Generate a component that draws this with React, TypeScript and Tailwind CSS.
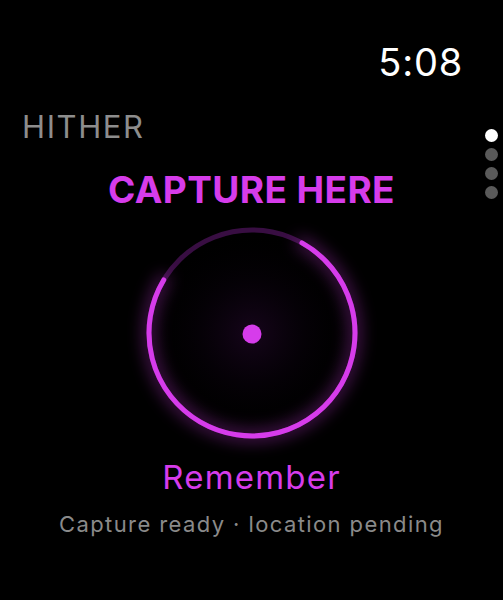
import React from "react";

const ACCENT = "#d63ceb";

// Arc from startDeg to endDeg (clockwise, 0 = top)
function arcPath(cx: number, cy: number, r: number, startDeg: number, endDeg: number) {
  const toXY = (deg: number) => {
    const a = ((deg - 90) * Math.PI) / 180;
    return [cx + r * Math.cos(a), cy + r * Math.sin(a)];
  };
  const [x1, y1] = toXY(startDeg);
  const [x2, y2] = toXY(endDeg);
  const sweep = (endDeg - startDeg + 360) % 360;
  const large = sweep > 180 ? 1 : 0;
  return `M ${x1} ${y1} A ${r} ${r} 0 ${large} 1 ${x2} ${y2}`;
}

function CaptureRing() {
  const size = 260;
  const c = size / 2;
  const r = 103;
  const progress = arcPath(c, c, r, 29, 301);
  return (
    <svg width={size} height={size} viewBox={`0 0 ${size} ${size}`}>
      <defs>
        <radialGradient id="inner" cx="50%" cy="50%" r="50%">
          <stop offset="0%" stopColor="#1c0622" stopOpacity="0.8" />
          <stop offset="50%" stopColor="#0a020d" stopOpacity="0.5" />
          <stop offset="100%" stopColor="#000" stopOpacity="0" />
        </radialGradient>
        <filter id="glow" x="-30%" y="-30%" width="160%" height="160%">
          <feGaussianBlur stdDeviation="8" />
        </filter>
      </defs>
      <circle cx={c} cy={c} r={r} fill="url(#inner)" />
      <circle cx={c} cy={c} r={r} fill="none" stroke="#380e42" strokeWidth={5} />
      <path d={progress} fill="none" stroke={ACCENT} strokeWidth={12} strokeLinecap="round" opacity={0.35} filter="url(#glow)" />
      <path d={progress} fill="none" stroke={ACCENT} strokeWidth={5} strokeLinecap="round" />
      <circle cx={c} cy={c + 1} r={9.5} fill={ACCENT} />
    </svg>
  );
}

export default function App() {
  return (
    <div
      className="relative w-[503px] h-[600px] bg-black overflow-hidden flex flex-col"
      style={{ fontFamily: "Inter, 'Noto Sans', sans-serif" }}
    >
      <div className="flex justify-end pr-[40px] pt-[40px]">
        <span className="text-[38px] leading-[44px] text-white font-normal tracking-[0.8px]">5:08</span>
      </div>

      <div className="pl-[22px] mt-[25px]">
        <span className="text-[31px] leading-[36px] text-[#8d8d8d] font-normal tracking-[1.6px]">HITHER</span>
      </div>

      <div className="flex justify-center mt-[24px]">
        <span className="text-[37px] leading-[42px] font-bold text-[#d63ceb] tracking-[0.4px]">CAPTURE HERE</span>
      </div>

      <div className="flex justify-center mt-[-8px]">
        <CaptureRing />
      </div>

      <div className="flex justify-center mt-[-6px]">
        <span className="text-[33px] leading-[40px] text-[#d63ceb] tracking-[1.2px]">Remember</span>
      </div>

      <div className="flex justify-center mt-[13px]">
        <span className="text-[22px] leading-[28px] text-[#8a8a8a] tracking-[1.4px]">
          Capture ready · location pending
        </span>
      </div>

      <div className="absolute right-[5px] top-[129px] flex flex-col gap-[6px]">
        <span className="w-[13px] h-[13px] rounded-full bg-white" />
        <span className="w-[13px] h-[13px] rounded-full bg-[#5a5a5a]" />
        <span className="w-[13px] h-[13px] rounded-full bg-[#5a5a5a]" />
        <span className="w-[13px] h-[13px] rounded-full bg-[#5a5a5a]" />
      </div>
    </div>
  );
}
